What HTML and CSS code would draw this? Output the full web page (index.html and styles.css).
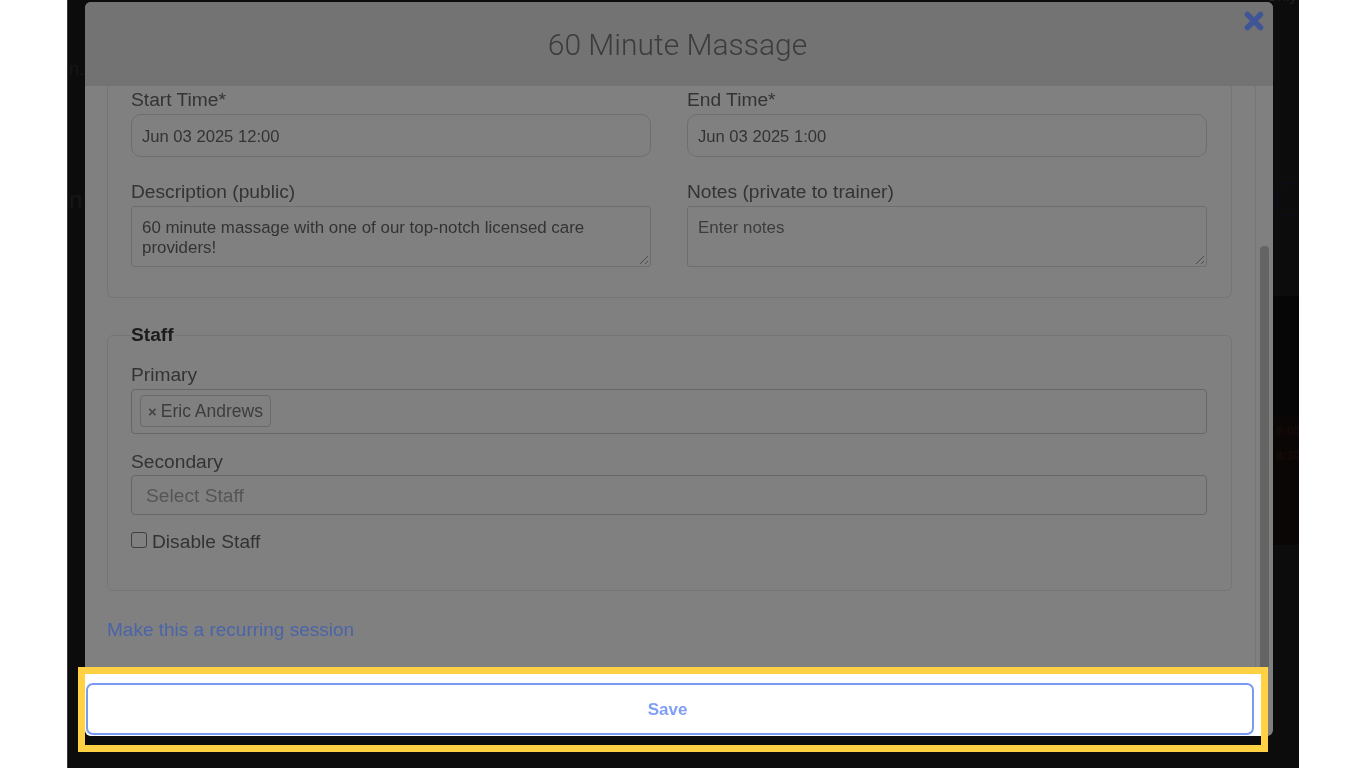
FILE: index.html
```html
<!DOCTYPE html>
<html lang="en">
<head>
<meta charset="utf-8">
<title>60 Minute Massage</title>
<link rel="stylesheet" href="styles.css">
</head>
<body>
<div class="frame">
  <span class="bg-text bg-n1">n.</span>
  <span class="bg-text bg-n2">n</span>
  <span class="bg-text bg-top">Only</span>
  <span class="bg-btn"></span>
  <div class="bg-rows"><span class="bg-time">6:00</span><span class="bg-time">8:30</span></div>
  <div class="modal">
    <header class="modal-head">
      <h1>60 Minute Massage</h1>
      <svg class="close" viewBox="0 0 20 20" aria-label="Close"><path d="M3.5 3.5 16.500 16.500M16.500 3.500 3.500 16.500"/></svg>
    </header>
    <div class="modal-main">
      <div class="content">
        <div class="group group-open">
          <div class="row">
            <div class="field">
              <label>Start Time*</label>
              <div class="input">Jun 03 2025 12:00</div>
            </div>
            <div class="field">
              <label>End Time*</label>
              <div class="input">Jun 03 2025 1:00</div>
            </div>
          </div>
          <div class="row row-second">
            <div class="field">
              <label>Description (public)</label>
              <div class="area">60 minute massage with one of our top-notch licensed care providers!
                <svg class="grip" viewBox="0 0 10 10"><path d="M1 9 9 1M6 9 9 6"/></svg>
              </div>
            </div>
            <div class="field">
              <label>Notes (private to trainer)</label>
              <div class="area">Enter notes
                <svg class="grip" viewBox="0 0 10 10"><path d="M1 9 9 1M6 9 9 6"/></svg>
              </div>
            </div>
          </div>
        </div>
        <fieldset class="group group-staff">
          <legend>Staff</legend>
          <label class="lbl-primary">Primary</label>
          <div class="select select-primary"><span class="tag"><span class="tag-x">×</span>Eric Andrews</span></div>
          <label class="lbl-secondary">Secondary</label>
          <div class="select select-secondary">Select Staff</div>
          <div class="check"><span class="box"></span><span>Disable Staff</span></div>
        </fieldset>
        <a class="recurring" href="#">Make this a recurring session</a>
      </div>
      <div class="gutter"><div class="thumb"></div></div>
    </div>
    <footer class="modal-foot">
      <button class="save">Save</button>
    </footer>
  </div>
</div>
<div class="highlight"></div>
</body>
</html>
```

FILE: styles.css
```css
* { box-sizing: border-box; }
html, body { margin: 0; height: 768px; overflow: hidden; background: #fff; }
body { font-family: "Liberation Sans", Arial, sans-serif; color: #333; position: relative; }

.frame {
  position: relative;
  width: 1232px;
  height: 768px;
  margin-left: 67px;
  padding: 2px 0 0 17px;
  background: #0c0c0c;
  border-left: 1px solid #3a3a3a;
  overflow: hidden;
}
.bg-text { position: absolute; color: #161616; font-size: 18px; }
.bg-n1 { left: 1px; top: 59px; }
.bg-n2 { left: 1px; top: 186px; font-size: 24px; }
.bg-top { right: 2px; top: -13px; font-size: 15px; color: #222; }
.bg-btn { position: absolute; left: 1209px; top: 183px; width: 40px; height: 33px; border: 1px solid #0c0c1c; border-radius: 8px; }
.bg-rows {
  position: absolute; left: 1205px; top: 296px; width: 26px; height: 249px;
  padding-top: 127px;
  background: linear-gradient(#060606 0 120px, #090605 120px);
  display: flex; flex-direction: column; gap: 8px;
}
.bg-time { color: #160a08; font-size: 12px; font-weight: bold; padding-left: 3px; line-height: 17px; }

.modal {
  width: 1188px;
  height: 734px;
  background: #808080;
  border-radius: 6px;
  overflow: hidden;
  display: flex;
  flex-direction: column;
  filter: blur(0.4px);
}
.modal-head {
  flex: none;
  height: 84px;
  background: #737373;
  display: flex;
  align-items: center;
  justify-content: center;
  position: relative;
}
.modal-head h1 { margin: 0 0 0 -3px; font-family: Roboto, "Liberation Sans", sans-serif; font-size: 30px; font-weight: 300; color: #3c3c3c; }
.close { position: absolute; left: 1159px; top: 9px; width: 20px; height: 20px; }
.close path { fill: none; stroke: #3f5595; stroke-width: 5.500; stroke-linecap: round; }

.modal-main { flex: 1; min-height: 0; display: flex; }
.content { flex: 1; min-width: 0; padding: 0 23px 0 22px; }
.gutter { flex: none; width: 18px; border-left: 1px solid #767676; padding: 160px 4px 0 4px; }
.thumb { height: 100%; background: #646464; border-radius: 4px 4px 0 0; }

.group { border: 1px solid #757575; border-radius: 6px; margin: 0; }
.group-open { height: 212px; padding: 0 23px; border-top: 0; border-radius: 0 0 6px 6px; }
.row { display: flex; gap: 36px; }
.field { width: 520px; flex: none; }
.row-second { margin-top: 23px; }
label { display: block; font-size: 19.200px; line-height: 24px; color: #333; }
.group-open .row:first-child { padding-top: 2px; }
.input {
  height: 43px; margin-top: 2px; padding: 0 10px;
  border: 1px solid #6e6e6e; border-radius: 10px;
  font-size: 16.600px; line-height: 43px; color: #333;
}
.area {
  position: relative; height: 61px; margin-top: 2px; padding: 11px 10px 0;
  border: 1px solid #6e6e6e; border-top-width: 1.500px; border-radius: 3px;
  font-size: 16.900px; line-height: 20px; color: #333;
}
.field:last-child .area { color: #3c3c3c; }
.grip { position: absolute; right: 1px; bottom: 1px; width: 10px; height: 10px; }
.grip path { fill: none; stroke: #4c4c4c; stroke-width: 1; }

.group-staff { height: 267px; margin-top: 26px; padding: 0 24px 0 23px; }
legend { padding: 0; font-size: 19.200px; font-weight: bold; line-height: 22px; color: #1c1c1c; }
.lbl-primary { margin-top: 17px; }
.lbl-secondary { margin-top: 16px; }
.select { border: 1.500px solid #666; border-radius: 4px; }
.select-primary { height: 45px; margin-top: 2px; padding: 5px 8px; }
.select-secondary { height: 40px; margin-top: 1px; padding: 0 14px; font-size: 19.200px; line-height: 39px; color: #555; }
.tag {
  display: inline-flex; align-items: center; height: 32px; padding: 0 7px;
  border: 1px solid #6a6a6a; border-radius: 4px;
  font-size: 17.500px; color: #3c3c3c;
}
.tag-x { font-size: 15px; font-weight: bold; margin-right: 4px; color: #444; }
.check { display: flex; align-items: center; gap: 5px; margin-top: 15px; font-size: 19.200px; line-height: 24px; color: #333; }
.box { width: 16px; height: 16px; margin-top: -5px; border: 1px solid #3e3e3e; border-radius: 3px; }

.recurring { display: block; margin-top: 27px; font-size: 19px; line-height: 24px; color: #4a64a8; text-decoration: none; }

.modal-foot { flex: none; height: 69px; margin-right: 12px; background: #fff; padding: 16px 0 0 1px; }
.save {
  display: block; width: 1168px; height: 52px; padding: 2px 5px 0 0;
  background: #fff; border: 2px solid #7a9af2; border-radius: 7px;
  font: bold 17px "Liberation Sans", Arial, sans-serif; color: #7f9ef5;
}

.highlight {
  position: absolute; left: 78px; top: 667px; width: 1190px; height: 85px;
  border: 7px solid #ffd143;
}
```
